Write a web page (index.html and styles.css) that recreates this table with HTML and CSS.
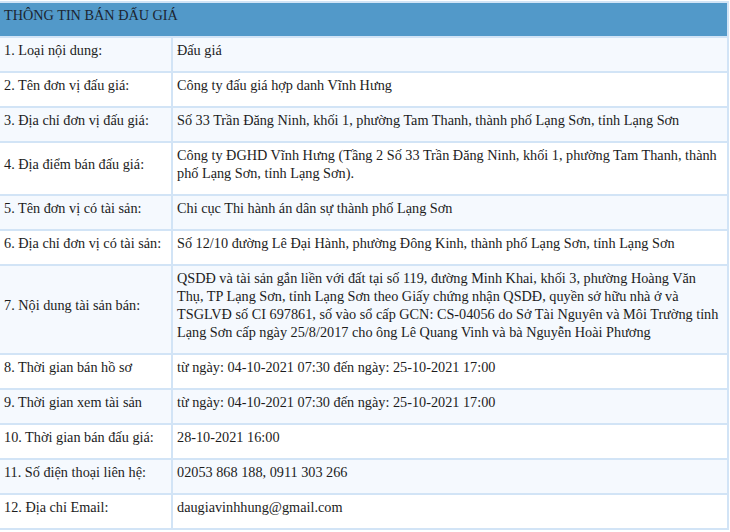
FILE: index.html
```html
<!DOCTYPE html>
<html lang="vi">
<head>
<meta charset="utf-8">
<link rel="stylesheet" href="styles.css">
</head>
<body>
<table class="info">
  <colgroup>
    <col class="col-label">
    <col class="col-value">
  </colgroup>
  <thead>
    <tr><th colspan="2" class="head"><p>THÔNG TIN BÁN ĐẤU GIÁ</p></th></tr>
  </thead>
  <tbody>
    <tr><td class="label"><p>1. Loại nội dung:</p></td><td class="value"><p>Đấu giá</p></td></tr>
    <tr><td class="label"><p>2. Tên đơn vị đấu giá:</p></td><td class="value"><p>Công ty đấu giá hợp danh Vĩnh Hưng</p></td></tr>
    <tr><td class="label"><p>3. Địa chỉ đơn vị đấu giá:</p></td><td class="value"><p>Số 33 Trần Đăng Ninh, khối 1, phường Tam Thanh, thành phố Lạng Sơn, tỉnh Lạng Sơn</p></td></tr>
    <tr><td class="label"><p>4. Địa điểm bán đấu giá:</p></td><td class="value"><p>Công ty ĐGHD Vĩnh Hưng (Tầng 2 Số 33 Trần Đăng Ninh, khối 1, phường Tam Thanh, thành phố Lạng Sơn, tỉnh Lạng Sơn).</p></td></tr>
    <tr><td class="label"><p>5. Tên đơn vị có tài sản:</p></td><td class="value"><p>Chi cục Thi hành án dân sự thành phố Lạng Sơn</p></td></tr>
    <tr><td class="label"><p>6. Địa chỉ đơn vị có tài sản:</p></td><td class="value"><p>Số 12/10 đường Lê Đại Hành, phường Đông Kinh, thành phố Lạng Sơn, tỉnh Lạng Sơn</p></td></tr>
    <tr><td class="label"><p>7. Nội dung tài sản bán:</p></td><td class="value"><p>QSDĐ và tài sản gắn liền với đất tại số 119, đường Minh Khai, khối 3, phường Hoàng Văn Thụ, TP Lạng Sơn, tỉnh Lạng Sơn theo Giấy chứng nhận QSDĐ, quyền sở hữu nhà ở và TSGLVĐ số CI 697861, số vào sổ cấp GCN: CS-04056 do Sở Tài Nguyên và Môi Trường tỉnh Lạng Sơn cấp ngày 25/8/2017 cho ông Lê Quang Vinh và bà Nguyễn Hoài Phương</p></td></tr>
    <tr><td class="label"><p>8. Thời gian bán hồ sơ</p></td><td class="value"><p>từ ngày: 04-10-2021 07:30 đến ngày: 25-10-2021 17:00</p></td></tr>
    <tr><td class="label"><p>9. Thời gian xem tài sản</p></td><td class="value"><p>từ ngày: 04-10-2021 07:30 đến ngày: 25-10-2021 17:00</p></td></tr>
    <tr><td class="label"><p>10. Thời gian bán đấu giá:</p></td><td class="value"><p>28-10-2021 16:00</p></td></tr>
    <tr><td class="label"><p>11. Số điện thoại liên hệ:</p></td><td class="value"><p>02053 868 188, 0911 303 266</p></td></tr>
    <tr><td class="label"><p>12. Địa chỉ Email:</p></td><td class="value"><p>daugiavinhhung@gmail.com</p></td></tr>
  </tbody>
</table>
</body>
</html>
```

FILE: styles.css
```css
html, body {
  margin: 0;
  padding: 0;
  background: #ffffff;
}
body {
  font-family: "Liberation Serif", "Times New Roman", serif;
  font-size: 14.25px;
  color: #1c1c1c;
}
.info {
  width: 729px;
  border-collapse: collapse;
  margin-top: 1px;
  table-layout: fixed;
}
.col-label {
  width: 172px;
}
.info th,
.info td {
  border: 2px solid #d2e4f6;
  padding: 3px 4px;
  text-align: left;
  vertical-align: middle;
  line-height: 18px;
}
.info tr > :first-child {
  border-left: none;
}
.info p {
  margin: 0 0 9px 0;
}
.head {
  background: #5299c9;
  font-weight: normal;
  color: #1c2530;
}
.info tbody tr:nth-child(odd) td {
  background: #f5f9fe;
}
.info tbody tr:nth-child(even) td {
  background: #ffffff;
}
```
